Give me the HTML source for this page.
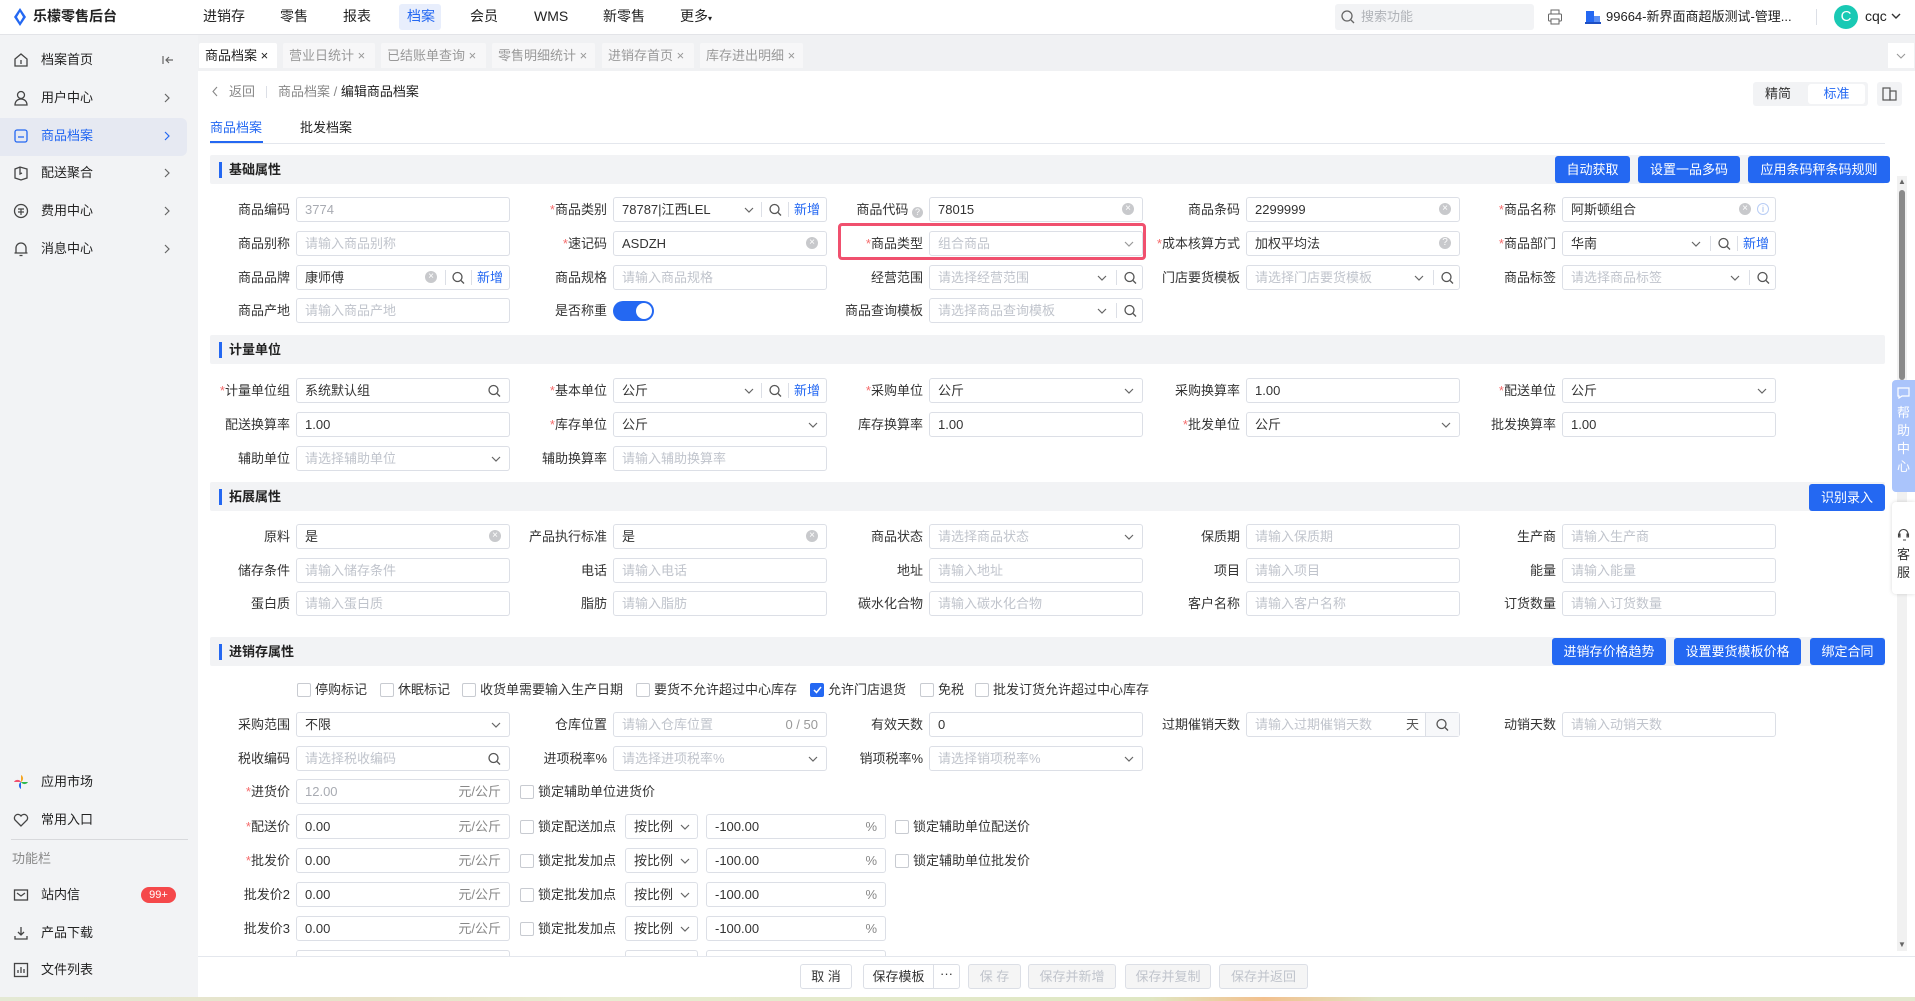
<!DOCTYPE html>
<html><head><meta charset="utf-8">
<style>
*{margin:0;padding:0;box-sizing:border-box}
body{width:1915px;height:1001px;position:relative;overflow:hidden;background:#fff;font-family:"Liberation Sans","Noto Sans CJK SC",sans-serif;font-size:13px;color:#333}
.abs{position:absolute}
.top{position:absolute;left:0;top:0;width:1915px;height:35px;background:#fff;border-bottom:1px solid #e3e4e8}
.nav{position:absolute;top:0;height:35px;line-height:33px;font-size:14px;color:#222}
.side{position:absolute;left:0;top:35px;width:198px;height:966px;background:#f2f3f5}
.si{position:absolute;left:0;width:187px;height:38px;line-height:38px;font-size:13px;color:#222}
.si .t{position:absolute;left:41px}
.si .ic{position:absolute;left:13px;top:11px}
.si .ar{position:absolute;left:164px;top:14px}
.tabbar{position:absolute;left:198px;top:35px;width:1717px;height:36px;background:#f0f1f3}
.tab{position:absolute;top:43px;height:25px;line-height:25px;padding-left:6px;font-size:13px;color:#999;background:#f7f7f8;border-radius:2px 2px 0 0}
.sec{position:absolute;left:210px;width:1675px;height:29px;background:#f2f3f5;border-radius:2px}
.sec b{position:absolute;left:9px;top:7px;width:3px;height:16px;background:#2468f2}
.sec span{position:absolute;left:19px;top:0;line-height:29px;font-weight:bold;font-size:13px;color:#222}
.btn{position:absolute;height:27px;line-height:27px;background:#2468f2;color:#fff;border-radius:3px;text-align:center;font-size:13px}
.l{position:absolute;width:120px;text-align:right;line-height:25px;font-size:13px;color:#333;white-space:nowrap}
.r{color:#f56c6c;font-weight:normal}
.i{position:absolute;width:214px;height:25px;border:1px solid #dcdfe6;border-radius:3px;background:#fff;line-height:23px;padding-left:8px;font-size:13px;color:#333;white-space:nowrap}
.ph{color:#c0c4cc}
.a{position:absolute;top:50%;transform:translateY(-50%);line-height:13px}
.d{position:absolute;top:4px;bottom:4px;width:1px;background:#dcdfe6}
.x{position:absolute;top:5px;width:12px;height:12px;border-radius:6px;background:#c8c9cc;color:#fff;font-size:10px;line-height:12px;text-align:center}
.nw{position:absolute;top:0;color:#2468f2;line-height:23px}
.cb{position:absolute;width:14px;height:14px;border:1px solid #c8cbd1;border-radius:2px;background:#fff}
.cbt{position:absolute;line-height:16px;font-size:13px;color:#333;white-space:nowrap}
.bb{position:absolute;top:964px;height:25px;line-height:23px;border:1px solid #dcdfe6;border-radius:3px;text-align:center;font-size:13px;background:#fff;color:#333}
.dis{background:#f5f5f5;color:#c0c4cc}
</style></head><body>

<!-- top bar -->
<div class="top">
  <svg class="abs" style="left:13px;top:8px" width="14" height="18" viewBox="0 0 14 18"><path d="M7 0L13 9 7 18 1 9Z" fill="#2468f2"/><path d="M7 4L10 9 7 14 4 9Z" fill="#fff"/></svg>
  <div class="abs" style="left:33px;top:0;line-height:33px;font-size:14px;font-weight:bold;color:#222">乐檬零售后台</div>
  <div class="nav" style="left:203px">进销存</div>
  <div class="nav" style="left:280px">零售</div>
  <div class="nav" style="left:343px">报表</div>
  <div class="abs" style="left:399px;top:4px;width:42px;height:26px;background:#e8eefc;border-radius:3px"></div>
  <div class="nav" style="left:407px;color:#2468f2">档案</div>
  <div class="nav" style="left:470px">会员</div>
  <div class="nav" style="left:534px">WMS</div>
  <div class="nav" style="left:603px">新零售</div>
  <div class="nav" style="left:680px">更多<span style="font-size:8px">▾</span></div>
  <div class="abs" style="left:1335px;top:4px;width:199px;height:26px;background:#f2f3f5;border-radius:3px"></div>
  <svg class="abs" style="left:1341px;top:10px" width="14" height="14" viewBox="0 0 14 14"><circle cx="6" cy="6" r="5" fill="none" stroke="#666" stroke-width="1.3"/><path d="M10 10l3 3" stroke="#666" stroke-width="1.3"/></svg>
  <div class="abs" style="left:1361px;top:0;line-height:33px;color:#b0b3b8">搜索功能</div>
  <svg class="abs" style="left:1547px;top:9px" width="16" height="16" viewBox="0 0 16 16"><rect x="4" y="1" width="8" height="4" fill="none" stroke="#666"/><rect x="1.5" y="5" width="13" height="7" rx="1" fill="none" stroke="#666"/><rect x="4" y="10" width="8" height="5" fill="#fff" stroke="#666"/></svg>
  <svg class="abs" style="left:1585px;top:10px" width="16" height="14" viewBox="0 0 16 14"><rect x="1" y="1" width="8" height="12" fill="#2468f2"/><rect x="9" y="6" width="6" height="7" fill="#5b8ff5"/><rect x="0" y="12" width="16" height="2" fill="#1d4fc4"/></svg>
  <div class="abs" style="left:1606px;top:0;line-height:33px;color:#222">99664-新界面商超版测试-管理...</div>
  <div class="abs" style="left:1816px;top:9px;width:1px;height:16px;background:#dcdfe6"></div>
  <div class="abs" style="left:1834px;top:5px;width:24px;height:24px;border-radius:12px;background:#19c9b4;color:#fff;text-align:center;line-height:24px;font-size:15px">C</div>
  <div class="abs" style="left:1865px;top:0;line-height:33px;font-size:14px;color:#222">cqc</div>
  <svg class="abs" style="left:1891px;top:13px" width="10" height="7" viewBox="0 0 10 7"><path d="M1 1l4 4 4-4" fill="none" stroke="#333" stroke-width="1.4"/></svg>
</div>

<!-- sidebar -->
<div class="side">
  <div class="abs" style="left:0;top:83px;width:187px;height:38px;background:#e6e9f2;border-radius:0 6px 6px 0"></div>
</div>
<div class="si" style="top:41px"><svg class="ic" width="16" height="16" viewBox="0 0 16 16"><path d="M2 7L8 2 14 7V14H2Z" fill="none" stroke="#444" stroke-width="1.3"/><path d="M8 8v4" stroke="#444" stroke-width="1.3"/></svg><span class="t">档案首页</span><svg class="abs" style="left:162px;top:14px" width="12" height="10" viewBox="0 0 12 10"><path d="M1 1v8M11 5H4M7 2L4 5 7 8" fill="none" stroke="#666" stroke-width="1.2"/></svg></div>
<div class="si" style="top:79px"><svg class="ic" width="16" height="16" viewBox="0 0 16 16"><circle cx="8" cy="5" r="3.5" fill="none" stroke="#444" stroke-width="1.3"/><path d="M2 15c0-4 3-6 6-6s6 2 6 6Z" fill="none" stroke="#444" stroke-width="1.3"/></svg><span class="t">用户中心</span><svg class="ar" width="6" height="10" viewBox="0 0 6 10"><path d="M1 1l4 4-4 4" fill="none" stroke="#666" stroke-width="1.2"/></svg></div>
<div class="si" style="top:117px;color:#2468f2"><svg class="ic" width="16" height="16" viewBox="0 0 16 16"><rect x="2" y="2" width="12" height="12" rx="2" fill="none" stroke="#2468f2" stroke-width="1.3"/><path d="M5 9h6" stroke="#2468f2" stroke-width="1.3"/></svg><span class="t">商品档案</span><svg class="ar" width="6" height="10" viewBox="0 0 6 10"><path d="M1 1l4 4-4 4" fill="none" stroke="#2468f2" stroke-width="1.2"/></svg></div>
<div class="si" style="top:154px"><svg class="ic" width="16" height="16" viewBox="0 0 16 16"><path d="M2 4l5-2 7 2v9l-6 2-6-2Z" fill="none" stroke="#444" stroke-width="1.3"/><path d="M7 2v7l2-1" fill="none" stroke="#444" stroke-width="1.3"/></svg><span class="t">配送聚合</span><svg class="ar" width="6" height="10" viewBox="0 0 6 10"><path d="M1 1l4 4-4 4" fill="none" stroke="#666" stroke-width="1.2"/></svg></div>
<div class="si" style="top:192px"><svg class="ic" width="16" height="16" viewBox="0 0 16 16"><circle cx="8" cy="8" r="6.5" fill="none" stroke="#444" stroke-width="1.3"/><path d="M5 6h6M5 9h6M8 6v6" stroke="#444" stroke-width="1.2"/></svg><span class="t">费用中心</span><svg class="ar" width="6" height="10" viewBox="0 0 6 10"><path d="M1 1l4 4-4 4" fill="none" stroke="#666" stroke-width="1.2"/></svg></div>
<div class="si" style="top:230px"><svg class="ic" width="16" height="16" viewBox="0 0 16 16"><path d="M3 12V7a5 5 0 0 1 10 0v5H3ZM1.5 12h13M6.5 14.5h3" fill="none" stroke="#444" stroke-width="1.3"/></svg><span class="t">消息中心</span><svg class="ar" width="6" height="10" viewBox="0 0 6 10"><path d="M1 1l4 4-4 4" fill="none" stroke="#666" stroke-width="1.2"/></svg></div>

<div class="si" style="top:763px"><svg class="ic" width="16" height="16" viewBox="0 0 16 16"><path d="M8 8V1a4 4 0 0 1 0 7Z" fill="#f5a623"/><path d="M8 8h7a4 4 0 0 1-7 0Z" fill="#2db84d"/><path d="M8 8v7a4 4 0 0 1 0-7Z" fill="#2468f2"/><path d="M8 8H1a4 4 0 0 1 7 0Z" fill="#f0506e"/></svg><span class="t">应用市场</span></div>
<div class="si" style="top:801px"><svg class="ic" width="16" height="16" viewBox="0 0 16 16"><path d="M8 14L2 8a3.5 3.5 0 0 1 6-4 3.5 3.5 0 0 1 6 4Z" fill="none" stroke="#444" stroke-width="1.3"/></svg><span class="t">常用入口</span></div>
<div class="abs" style="left:11px;top:839px;width:177px;height:1px;background:#d8d9dc"></div>
<div class="abs" style="left:12px;top:850px;line-height:18px;color:#888">功能栏</div>
<div class="si" style="top:876px"><svg class="ic" width="16" height="16" viewBox="0 0 16 16"><rect x="1.5" y="3" width="13" height="10" fill="none" stroke="#444" stroke-width="1.3"/><path d="M4 6l4 3 4-3" fill="none" stroke="#444" stroke-width="1.2"/></svg><span class="t">站内信</span><span class="abs" style="left:141px;top:11px;width:35px;height:16px;line-height:16px;border-radius:8px;background:#f5484a;color:#fff;font-size:11px;text-align:center">99+</span></div>
<div class="si" style="top:914px"><svg class="ic" width="16" height="16" viewBox="0 0 16 16"><path d="M8 2v8M5 7l3 3 3-3M2 11v3h12v-3" fill="none" stroke="#444" stroke-width="1.3"/></svg><span class="t">产品下载</span></div>
<div class="si" style="top:951px"><svg class="ic" width="16" height="16" viewBox="0 0 16 16"><rect x="1.5" y="1.5" width="13" height="13" fill="none" stroke="#444" stroke-width="1.3"/><path d="M5 11V8M8 11V5M11 11V7" stroke="#444" stroke-width="1.3"/></svg><span class="t">文件列表</span></div>

<!-- tab bar -->
<div class="tabbar"></div>
<div class="tab" style="left:199px;width:78px;background:#fff;color:#222">商品档案 <span style="color:#222">×</span></div>
<div class="tab" style="left:283px;width:92px">营业日统计 ×</div>
<div class="tab" style="left:381px;width:105px">已结账单查询 ×</div>
<div class="tab" style="left:492px;width:103px">零售明细统计 ×</div>
<div class="tab" style="left:602px;width:92px">进销存首页 ×</div>
<div class="tab" style="left:700px;width:103px">库存进出明细 ×</div>
<div class="abs" style="left:1888px;top:43px;width:26px;height:25px;background:#fff"></div>
<svg class="abs" style="left:1896px;top:53px" width="10" height="6" viewBox="0 0 10 6"><path d="M1 1l4 4 4-4" fill="none" stroke="#999" stroke-width="1.1"/></svg>

<!-- breadcrumb -->
<svg class="abs" style="left:212px;top:86px" width="6" height="11" viewBox="0 0 6 11"><path d="M5 1L1 5.5 5 10" fill="none" stroke="#888" stroke-width="1.1"/></svg>
<div class="abs" style="left:229px;top:83px;line-height:18px;color:#888">返回</div>
<div class="abs" style="left:266px;top:86px;width:1px;height:12px;background:#dcdfe6"></div>
<div class="abs" style="left:278px;top:83px;line-height:18px;color:#888">商品档案 / <span style="color:#222">编辑商品档案</span></div>
<div class="abs" style="left:1753px;top:82px;width:115px;height:24px;background:#f2f3f5;border-radius:3px"></div>
<div class="abs" style="left:1765px;top:82px;line-height:24px;color:#333">精简</div>
<div class="abs" style="left:1808px;top:84px;width:57px;height:20px;background:#fff;border-radius:3px;color:#2468f2;text-align:center;line-height:20px">标准</div>
<div class="abs" style="left:1877px;top:82px;width:25px;height:24px;background:#f2f3f5;border-radius:3px"></div>
<svg class="abs" style="left:1882px;top:87px" width="15" height="14" viewBox="0 0 15 14"><rect x="1" y="1" width="7" height="12" fill="none" stroke="#555" stroke-width="1.2"/><rect x="8" y="4" width="6" height="9" fill="none" stroke="#555" stroke-width="1.2"/></svg>

<!-- sub tabs -->
<div class="abs" style="left:210px;top:119px;line-height:18px;color:#2468f2">商品档案</div>
<div class="abs" style="left:300px;top:119px;line-height:18px;color:#222">批发档案</div>
<div class="abs" style="left:210px;top:143px;width:1675px;height:1px;background:#e4e7ed"></div>
<div class="abs" style="left:210px;top:141px;width:53px;height:2px;background:#2468f2"></div>

<!-- red highlight -->
<div class="abs" style="left:838px;top:223px;width:308px;height:37px;border:3px solid #f0506e;border-radius:4px"></div>

<!-- section: 基础属性 -->
<div class="sec" style="top:155px"><b></b><span>基础属性</span></div>
<div class="btn" style="left:1555px;top:156px;width:75px">自动获取</div>
<div class="btn" style="left:1638px;top:156px;width:102px">设置一品多码</div>
<div class="btn" style="left:1748px;top:156px;width:142px">应用条码秤条码规则</div>

<!-- row1 -->
<div class="l" style="left:170px;top:197px">商品编码</div>
<div class="i" style="left:296px;top:197px;color:#a8abb2">3774</div>
<div class="l" style="left:487px;top:197px"><span class="r">*</span>商品类别</div>
<div class="i" style="left:613px;top:197px">78787|江西LEL<svg class="a" style="right:72px" width="10" height="6" viewBox="0 0 10 6"><path d="M1 1l4 4 4-4" fill="none" stroke="#666" stroke-width="1.2"/></svg><i class="d" style="right:64px"></i><svg class="a" style="right:44px" width="13" height="13" viewBox="0 0 13 13"><circle cx="5.5" cy="5.5" r="4.5" fill="none" stroke="#555" stroke-width="1.3"/><path d="M9 9l3 3" stroke="#555" stroke-width="1.3"/></svg><i class="d" style="right:37px"></i><span class="nw" style="right:6px">新增</span></div>
<div class="l" style="left:803px;top:197px">商品代码 <span style="display:inline-block;width:11px;height:11px;border-radius:6px;background:#c8c9cc;color:#fff;font-size:9px;line-height:11px;text-align:center;vertical-align:-1px">?</span></div>
<div class="i" style="left:929px;top:197px">78015<span class="x" style="right:8px">×</span></div>
<div class="l" style="left:1120px;top:197px">商品条码</div>
<div class="i" style="left:1246px;top:197px">2299999<span class="x" style="right:8px">×</span></div>
<div class="l" style="left:1436px;top:197px"><span class="r">*</span>商品名称</div>
<div class="i" style="left:1562px;top:197px">阿斯顿组合<span class="x" style="right:24px">×</span><span class="abs" style="right:6px;top:5px;width:12px;height:12px;border:1px solid #b8cdf5;border-radius:6px;color:#9bb6ee;font-size:9px;line-height:10px;text-align:center">i</span></div>

<!-- row2 -->
<div class="l" style="left:170px;top:231px">商品别称</div>
<div class="i ph" style="left:296px;top:231px">请输入商品别称</div>
<div class="l" style="left:487px;top:231px"><span class="r">*</span>速记码</div>
<div class="i" style="left:613px;top:231px">ASDZH<span class="x" style="right:8px">×</span></div>
<div class="l" style="left:803px;top:231px"><span class="r">*</span>商品类型</div>
<div class="i ph" style="left:929px;top:231px">组合商品<svg class="a" style="right:8px" width="10" height="6" viewBox="0 0 10 6"><path d="M1 1l4 4 4-4" fill="none" stroke="#999" stroke-width="1.2"/></svg></div>
<div class="l" style="left:1120px;top:231px"><span class="r">*</span>成本核算方式</div>
<div class="i" style="left:1246px;top:231px">加权平均法<span class="x" style="right:8px">?</span></div>
<div class="l" style="left:1436px;top:231px"><span class="r">*</span>商品部门</div>
<div class="i" style="left:1562px;top:231px">华南<svg class="a" style="right:74px" width="10" height="6" viewBox="0 0 10 6"><path d="M1 1l4 4 4-4" fill="none" stroke="#666" stroke-width="1.2"/></svg><i class="d" style="right:64px"></i><svg class="a" style="right:44px" width="13" height="13" viewBox="0 0 13 13"><circle cx="5.5" cy="5.5" r="4.5" fill="none" stroke="#555" stroke-width="1.3"/><path d="M9 9l3 3" stroke="#555" stroke-width="1.3"/></svg><i class="d" style="right:37px"></i><span class="nw" style="right:6px">新增</span></div>

<!-- row3 -->
<div class="l" style="left:170px;top:265px">商品品牌</div>
<div class="i" style="left:296px;top:265px">康师傅<span class="x" style="right:72px">×</span><i class="d" style="right:63px"></i><svg class="a" style="right:44px" width="13" height="13" viewBox="0 0 13 13"><circle cx="5.5" cy="5.5" r="4.5" fill="none" stroke="#555" stroke-width="1.3"/><path d="M9 9l3 3" stroke="#555" stroke-width="1.3"/></svg><i class="d" style="right:37px"></i><span class="nw" style="right:6px">新增</span></div>
<div class="l" style="left:487px;top:265px">商品规格</div>
<div class="i ph" style="left:613px;top:265px">请输入商品规格</div>
<div class="l" style="left:803px;top:265px">经营范围</div>
<div class="i ph" style="left:929px;top:265px">请选择经营范围<svg class="a" style="right:35px" width="10" height="6" viewBox="0 0 10 6"><path d="M1 1l4 4 4-4" fill="none" stroke="#666" stroke-width="1.2"/></svg><i class="d" style="right:25px"></i><svg class="a" style="right:5px" width="13" height="13" viewBox="0 0 13 13"><circle cx="5.5" cy="5.5" r="4.5" fill="none" stroke="#555" stroke-width="1.3"/><path d="M9 9l3 3" stroke="#555" stroke-width="1.3"/></svg></div>
<div class="l" style="left:1120px;top:265px">门店要货模板</div>
<div class="i ph" style="left:1246px;top:265px">请选择门店要货模板<svg class="a" style="right:35px" width="10" height="6" viewBox="0 0 10 6"><path d="M1 1l4 4 4-4" fill="none" stroke="#666" stroke-width="1.2"/></svg><i class="d" style="right:25px"></i><svg class="a" style="right:5px" width="13" height="13" viewBox="0 0 13 13"><circle cx="5.5" cy="5.5" r="4.5" fill="none" stroke="#555" stroke-width="1.3"/><path d="M9 9l3 3" stroke="#555" stroke-width="1.3"/></svg></div>
<div class="l" style="left:1436px;top:265px">商品标签</div>
<div class="i ph" style="left:1562px;top:265px">请选择商品标签<svg class="a" style="right:35px" width="10" height="6" viewBox="0 0 10 6"><path d="M1 1l4 4 4-4" fill="none" stroke="#666" stroke-width="1.2"/></svg><i class="d" style="right:25px"></i><svg class="a" style="right:5px" width="13" height="13" viewBox="0 0 13 13"><circle cx="5.5" cy="5.5" r="4.5" fill="none" stroke="#555" stroke-width="1.3"/><path d="M9 9l3 3" stroke="#555" stroke-width="1.3"/></svg></div>

<!-- row4 -->
<div class="l" style="left:170px;top:298px">商品产地</div>
<div class="i ph" style="left:296px;top:298px">请输入商品产地</div>
<div class="l" style="left:487px;top:298px">是否称重</div>
<div class="abs" style="left:613px;top:301px;width:41px;height:20px;border-radius:10px;background:#2468f2"><div class="abs" style="left:23px;top:2px;width:16px;height:16px;border-radius:8px;background:#fff"></div></div>
<div class="l" style="left:803px;top:298px">商品查询模板</div>
<div class="i ph" style="left:929px;top:298px">请选择商品查询模板<svg class="a" style="right:35px" width="10" height="6" viewBox="0 0 10 6"><path d="M1 1l4 4 4-4" fill="none" stroke="#666" stroke-width="1.2"/></svg><i class="d" style="right:25px"></i><svg class="a" style="right:5px" width="13" height="13" viewBox="0 0 13 13"><circle cx="5.5" cy="5.5" r="4.5" fill="none" stroke="#555" stroke-width="1.3"/><path d="M9 9l3 3" stroke="#555" stroke-width="1.3"/></svg></div>

<!-- section: 计量单位 -->
<div class="sec" style="top:335px"><b></b><span>计量单位</span></div>
<div class="l" style="left:170px;top:378px"><span class="r">*</span>计量单位组</div>
<div class="i" style="left:296px;top:378px">系统默认组<svg class="a" style="right:8px" width="13" height="13" viewBox="0 0 13 13"><circle cx="5.5" cy="5.5" r="4.5" fill="none" stroke="#555" stroke-width="1.3"/><path d="M9 9l3 3" stroke="#555" stroke-width="1.3"/></svg></div>
<div class="l" style="left:487px;top:378px"><span class="r">*</span>基本单位</div>
<div class="i" style="left:613px;top:378px">公斤<svg class="a" style="right:72px" width="10" height="6" viewBox="0 0 10 6"><path d="M1 1l4 4 4-4" fill="none" stroke="#666" stroke-width="1.2"/></svg><i class="d" style="right:64px"></i><svg class="a" style="right:44px" width="13" height="13" viewBox="0 0 13 13"><circle cx="5.5" cy="5.5" r="4.5" fill="none" stroke="#555" stroke-width="1.3"/><path d="M9 9l3 3" stroke="#555" stroke-width="1.3"/></svg><i class="d" style="right:37px"></i><span class="nw" style="right:6px">新增</span></div>
<div class="l" style="left:803px;top:378px"><span class="r">*</span>采购单位</div>
<div class="i" style="left:929px;top:378px">公斤<svg class="a" style="right:8px" width="10" height="6" viewBox="0 0 10 6"><path d="M1 1l4 4 4-4" fill="none" stroke="#666" stroke-width="1.2"/></svg></div>
<div class="l" style="left:1120px;top:378px">采购换算率</div>
<div class="i" style="left:1246px;top:378px">1.00</div>
<div class="l" style="left:1436px;top:378px"><span class="r">*</span>配送单位</div>
<div class="i" style="left:1562px;top:378px">公斤<svg class="a" style="right:8px" width="10" height="6" viewBox="0 0 10 6"><path d="M1 1l4 4 4-4" fill="none" stroke="#666" stroke-width="1.2"/></svg></div>

<div class="l" style="left:170px;top:412px">配送换算率</div>
<div class="i" style="left:296px;top:412px">1.00</div>
<div class="l" style="left:487px;top:412px"><span class="r">*</span>库存单位</div>
<div class="i" style="left:613px;top:412px">公斤<svg class="a" style="right:8px" width="10" height="6" viewBox="0 0 10 6"><path d="M1 1l4 4 4-4" fill="none" stroke="#666" stroke-width="1.2"/></svg></div>
<div class="l" style="left:803px;top:412px">库存换算率</div>
<div class="i" style="left:929px;top:412px">1.00</div>
<div class="l" style="left:1120px;top:412px"><span class="r">*</span>批发单位</div>
<div class="i" style="left:1246px;top:412px">公斤<svg class="a" style="right:8px" width="10" height="6" viewBox="0 0 10 6"><path d="M1 1l4 4 4-4" fill="none" stroke="#666" stroke-width="1.2"/></svg></div>
<div class="l" style="left:1436px;top:412px">批发换算率</div>
<div class="i" style="left:1562px;top:412px">1.00</div>

<div class="l" style="left:170px;top:446px">辅助单位</div>
<div class="i ph" style="left:296px;top:446px">请选择辅助单位<svg class="a" style="right:8px" width="10" height="6" viewBox="0 0 10 6"><path d="M1 1l4 4 4-4" fill="none" stroke="#666" stroke-width="1.2"/></svg></div>
<div class="l" style="left:487px;top:446px">辅助换算率</div>
<div class="i ph" style="left:613px;top:446px">请输入辅助换算率</div>

<!-- section: 拓展属性 -->
<div class="sec" style="top:482px"><b></b><span>拓展属性</span></div>
<div class="btn" style="left:1809px;top:484px;width:76px">识别录入</div>

<div class="l" style="left:170px;top:524px">原料</div>
<div class="i" style="left:296px;top:524px">是<span class="x" style="right:8px">×</span></div>
<div class="l" style="left:487px;top:524px">产品执行标准</div>
<div class="i" style="left:613px;top:524px">是<span class="x" style="right:8px">×</span></div>
<div class="l" style="left:803px;top:524px">商品状态</div>
<div class="i ph" style="left:929px;top:524px">请选择商品状态<svg class="a" style="right:8px" width="10" height="6" viewBox="0 0 10 6"><path d="M1 1l4 4 4-4" fill="none" stroke="#666" stroke-width="1.2"/></svg></div>
<div class="l" style="left:1120px;top:524px">保质期</div>
<div class="i ph" style="left:1246px;top:524px">请输入保质期</div>
<div class="l" style="left:1436px;top:524px">生产商</div>
<div class="i ph" style="left:1562px;top:524px">请输入生产商</div>

<div class="l" style="left:170px;top:558px">储存条件</div>
<div class="i ph" style="left:296px;top:558px">请输入储存条件</div>
<div class="l" style="left:487px;top:558px">电话</div>
<div class="i ph" style="left:613px;top:558px">请输入电话</div>
<div class="l" style="left:803px;top:558px">地址</div>
<div class="i ph" style="left:929px;top:558px">请输入地址</div>
<div class="l" style="left:1120px;top:558px">项目</div>
<div class="i ph" style="left:1246px;top:558px">请输入项目</div>
<div class="l" style="left:1436px;top:558px">能量</div>
<div class="i ph" style="left:1562px;top:558px">请输入能量</div>

<div class="l" style="left:170px;top:591px">蛋白质</div>
<div class="i ph" style="left:296px;top:591px">请输入蛋白质</div>
<div class="l" style="left:487px;top:591px">脂肪</div>
<div class="i ph" style="left:613px;top:591px">请输入脂肪</div>
<div class="l" style="left:803px;top:591px">碳水化合物</div>
<div class="i ph" style="left:929px;top:591px">请输入碳水化合物</div>
<div class="l" style="left:1120px;top:591px">客户名称</div>
<div class="i ph" style="left:1246px;top:591px">请输入客户名称</div>
<div class="l" style="left:1436px;top:591px">订货数量</div>
<div class="i ph" style="left:1562px;top:591px">请输入订货数量</div>

<!-- section: 进销存属性 -->
<div class="sec" style="top:637px"><b></b><span>进销存属性</span></div>
<div class="btn" style="left:1552px;top:638px;width:114px">进销存价格趋势</div>
<div class="btn" style="left:1674px;top:638px;width:127px">设置要货模板价格</div>
<div class="btn" style="left:1810px;top:638px;width:75px">绑定合同</div>

<div class="cb" style="left:297px;top:683px"></div><div class="cbt" style="left:315px;top:682px">停购标记</div>
<div class="cb" style="left:380px;top:683px"></div><div class="cbt" style="left:398px;top:682px">休眠标记</div>
<div class="cb" style="left:462px;top:683px"></div><div class="cbt" style="left:480px;top:682px">收货单需要输入生产日期</div>
<div class="cb" style="left:636px;top:683px"></div><div class="cbt" style="left:654px;top:682px">要货不允许超过中心库存</div>
<div class="cb" style="left:810px;top:683px;background:#2468f2;border-color:#2468f2"><svg class="abs" style="left:2px;top:2px" width="9" height="8" viewBox="0 0 9 8"><path d="M1 4l2.5 2.5L8 1" fill="none" stroke="#fff" stroke-width="1.5"/></svg></div><div class="cbt" style="left:828px;top:682px">允许门店退货</div>
<div class="cb" style="left:920px;top:683px"></div><div class="cbt" style="left:938px;top:682px">免税</div>
<div class="cb" style="left:975px;top:683px"></div><div class="cbt" style="left:993px;top:682px">批发订货允许超过中心库存</div>

<div class="l" style="left:170px;top:712px">采购范围</div>
<div class="i" style="left:296px;top:712px">不限<svg class="a" style="right:8px" width="10" height="6" viewBox="0 0 10 6"><path d="M1 1l4 4 4-4" fill="none" stroke="#666" stroke-width="1.2"/></svg></div>
<div class="l" style="left:487px;top:712px">仓库位置</div>
<div class="i ph" style="left:613px;top:712px">请输入仓库位置<span class="abs" style="right:8px;top:0;color:#999">0 / 50</span></div>
<div class="l" style="left:803px;top:712px">有效天数</div>
<div class="i" style="left:929px;top:712px">0</div>
<div class="l" style="left:1120px;top:712px">过期催销天数</div>
<div class="i ph" style="left:1246px;top:712px;background:#fff">请输入过期催销天数<span class="abs" style="right:40px;top:0;color:#555">天</span><i class="d" style="right:33px;top:0;bottom:0"></i><span class="abs" style="right:0;top:0;width:33px;height:23px;background:#f7f8fa"></span><svg class="a" style="right:10px" width="13" height="13" viewBox="0 0 13 13"><circle cx="5.5" cy="5.5" r="4.5" fill="none" stroke="#555" stroke-width="1.3"/><path d="M9 9l3 3" stroke="#555" stroke-width="1.3"/></svg></div>
<div class="l" style="left:1436px;top:712px">动销天数</div>
<div class="i ph" style="left:1562px;top:712px">请输入动销天数</div>

<div class="l" style="left:170px;top:746px">税收编码</div>
<div class="i ph" style="left:296px;top:746px">请选择税收编码<svg class="a" style="right:8px" width="13" height="13" viewBox="0 0 13 13"><circle cx="5.5" cy="5.5" r="4.5" fill="none" stroke="#555" stroke-width="1.3"/><path d="M9 9l3 3" stroke="#555" stroke-width="1.3"/></svg></div>
<div class="l" style="left:487px;top:746px">进项税率%</div>
<div class="i ph" style="left:613px;top:746px">请选择进项税率%<svg class="a" style="right:8px" width="10" height="6" viewBox="0 0 10 6"><path d="M1 1l4 4 4-4" fill="none" stroke="#666" stroke-width="1.2"/></svg></div>
<div class="l" style="left:803px;top:746px">销项税率%</div>
<div class="i ph" style="left:929px;top:746px">请选择销项税率%<svg class="a" style="right:8px" width="10" height="6" viewBox="0 0 10 6"><path d="M1 1l4 4 4-4" fill="none" stroke="#666" stroke-width="1.2"/></svg></div>

<div class="l" style="left:170px;top:779px"><span class="r">*</span>进货价</div>
<div class="i" style="left:296px;top:779px;color:#a8abb2">12.00<span class="abs" style="right:8px;top:0;color:#888">元/公斤</span></div>
<div class="cb" style="left:520px;top:785px"></div><div class="cbt" style="left:538px;top:784px">锁定辅助单位进货价</div>

<div class="l" style="left:170px;top:814px"><span class="r">*</span>配送价</div>
<div class="i" style="left:296px;top:814px">0.00<span class="abs" style="right:8px;top:0;color:#888">元/公斤</span></div>
<div class="cb" style="left:520px;top:820px"></div><div class="cbt" style="left:538px;top:819px">锁定配送加点</div>
<div class="i" style="left:625px;top:814px;width:73px">按比例<svg class="a" style="right:7px" width="10" height="6" viewBox="0 0 10 6"><path d="M1 1l4 4 4-4" fill="none" stroke="#666" stroke-width="1.2"/></svg></div>
<div class="i" style="left:706px;top:814px;width:180px">-100.00<span class="abs" style="right:8px;top:0;color:#888">%</span></div>
<div class="cb" style="left:895px;top:820px"></div><div class="cbt" style="left:913px;top:819px">锁定辅助单位配送价</div>

<div class="l" style="left:170px;top:848px"><span class="r">*</span>批发价</div>
<div class="i" style="left:296px;top:848px">0.00<span class="abs" style="right:8px;top:0;color:#888">元/公斤</span></div>
<div class="cb" style="left:520px;top:854px"></div><div class="cbt" style="left:538px;top:853px">锁定批发加点</div>
<div class="i" style="left:625px;top:848px;width:73px">按比例<svg class="a" style="right:7px" width="10" height="6" viewBox="0 0 10 6"><path d="M1 1l4 4 4-4" fill="none" stroke="#666" stroke-width="1.2"/></svg></div>
<div class="i" style="left:706px;top:848px;width:180px">-100.00<span class="abs" style="right:8px;top:0;color:#888">%</span></div>
<div class="cb" style="left:895px;top:854px"></div><div class="cbt" style="left:913px;top:853px">锁定辅助单位批发价</div>

<div class="l" style="left:170px;top:882px">批发价2</div>
<div class="i" style="left:296px;top:882px">0.00<span class="abs" style="right:8px;top:0;color:#888">元/公斤</span></div>
<div class="cb" style="left:520px;top:888px"></div><div class="cbt" style="left:538px;top:887px">锁定批发加点</div>
<div class="i" style="left:625px;top:882px;width:73px">按比例<svg class="a" style="right:7px" width="10" height="6" viewBox="0 0 10 6"><path d="M1 1l4 4 4-4" fill="none" stroke="#666" stroke-width="1.2"/></svg></div>
<div class="i" style="left:706px;top:882px;width:180px">-100.00<span class="abs" style="right:8px;top:0;color:#888">%</span></div>

<div class="l" style="left:170px;top:916px">批发价3</div>
<div class="i" style="left:296px;top:916px">0.00<span class="abs" style="right:8px;top:0;color:#888">元/公斤</span></div>
<div class="cb" style="left:520px;top:922px"></div><div class="cbt" style="left:538px;top:921px">锁定批发加点</div>
<div class="i" style="left:625px;top:916px;width:73px">按比例<svg class="a" style="right:7px" width="10" height="6" viewBox="0 0 10 6"><path d="M1 1l4 4 4-4" fill="none" stroke="#666" stroke-width="1.2"/></svg></div>
<div class="i" style="left:706px;top:916px;width:180px">-100.00<span class="abs" style="right:8px;top:0;color:#888">%</span></div>

<div class="i" style="left:296px;top:950px"></div>
<div class="i" style="left:625px;top:950px;width:73px"></div>
<div class="i" style="left:706px;top:950px;width:180px"></div>

<!-- scrollbar -->
<div class="abs" style="left:1897px;top:176px;width:10px;height:775px;background:#f1f1f1"></div>
<div class="abs" style="left:1899px;top:190px;width:6px;height:190px;background:#8a8a8a;border-radius:3px"></div>
<div class="abs" style="left:1898px;top:178px;font-size:8px;color:#666;line-height:8px">▲</div>
<div class="abs" style="left:1898px;top:941px;font-size:8px;color:#666;line-height:8px">▼</div>

<!-- right float -->
<div class="abs" style="left:1892px;top:380px;width:23px;height:112px;background:#aac4fb;border-radius:4px 0 0 4px;color:#fff;font-size:13px;text-align:center;padding-top:6px;line-height:18px">
<svg width="13" height="12" viewBox="0 0 13 12"><path d="M1 1h11v8H5l-3 2V9H1Z" fill="none" stroke="#fff" stroke-width="1.2"/></svg><br>帮<br>助<br>中<br>心</div>
<div class="abs" style="left:1892px;top:502px;width:23px;height:92px;background:#fff;border-radius:4px 0 0 4px;box-shadow:0 0 4px rgba(0,0,0,.15);color:#333;font-size:13px;text-align:center;padding-top:26px;line-height:18px">
<svg width="13" height="13" viewBox="0 0 13 13"><path d="M2 8V6a4.5 4.5 0 0 1 9 0v2M1.5 6v3h1.5V6ZM10 6v3h1.5V6ZM6 12h3" fill="none" stroke="#444" stroke-width="1.1"/></svg><br>客<br>服</div>

<!-- bottom bar -->
<div class="abs" style="left:198px;top:956px;width:1717px;height:41px;background:#fff;border-top:1px solid #e4e7ed"></div>
<div class="bb" style="left:800px;width:52px">取 消</div>
<div class="bb" style="left:863px;width:71px;border-radius:3px 0 0 3px">保存模板</div>
<div class="bb" style="left:933px;width:27px;border-radius:0 3px 3px 0;line-height:18px">···</div>
<div class="bb dis" style="left:968px;width:53px">保 存</div>
<div class="bb dis" style="left:1028px;width:88px">保存并新增</div>
<div class="bb dis" style="left:1125px;width:86px">保存并复制</div>
<div class="bb dis" style="left:1219px;width:89px">保存并返回</div>
<div class="abs" style="left:0;top:997px;width:1915px;height:4px;background:linear-gradient(90deg,#e4e9d4 0%,#e7e2c8 20%,#e8ecd2 30%,#dfe7c3 60%,#f2c08e 66%,#dfe4c4 72%,#e3e8cf 100%)"></div>
</body></html>
